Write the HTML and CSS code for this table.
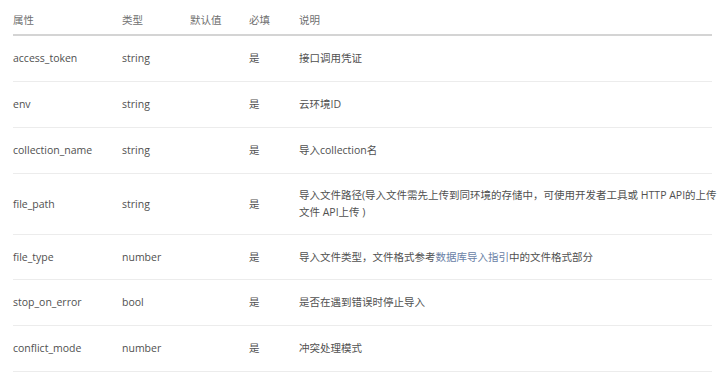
FILE: index.html
```html
<!DOCTYPE html>
<html lang="zh">
<head>
<meta charset="utf-8">
<link rel="stylesheet" href="styles.css">
</head>
<body>
<div class="table">
  <div class="row head">
    <div>属性</div><div>类型</div><div>默认值</div><div>必填</div><div>说明</div>
  </div>
  <div class="row">
    <div>access_token</div><div>string</div><div></div><div>是</div><div>接口调用凭证</div>
  </div>
  <div class="row">
    <div>env</div><div>string</div><div></div><div>是</div><div>云环境ID</div>
  </div>
  <div class="row">
    <div>collection_name</div><div>string</div><div></div><div>是</div><div>导入collection名</div>
  </div>
  <div class="row tall">
    <div>file_path</div><div>string</div><div></div><div>是</div><div class="desc">导入文件路径(导入文件需先上传到同环境的存储中，可使用开发者工具或 HTTP API的上传<br>文件 API上传 )</div>
  </div>
  <div class="row short">
    <div>file_type</div><div>number</div><div></div><div>是</div><div>导入文件类型，文件格式参考<span class="link">数据库导入指引</span>中的文件格式部分</div>
  </div>
  <div class="row">
    <div>stop_on_error</div><div>bool</div><div></div><div>是</div><div>是否在遇到错误时停止导入</div>
  </div>
  <div class="row">
    <div>conflict_mode</div><div>number</div><div></div><div>是</div><div>冲突处理模式</div>
  </div>
</div>
</body>
</html>
```

FILE: styles.css
```css
html, body {
  margin: 0;
  padding: 0;
  background: #ffffff;
}
body {
  font-family: "Open Sans", "Noto Sans CJK SC", sans-serif;
  font-size: 10.5px;
  line-height: 17px;
  color: #505050;
}
.table {
  margin-left: 13px;
  width: 699px;
}
.row {
  display: grid;
  grid-template-columns: 109px 68px 59px 50px 1fr;
  align-items: center;
  padding: 14px 0;
  border-bottom: 1px solid #ececec;
}
.row.head {
  padding: 12px 0 5px;
  border-bottom: 2px solid #d4d4d4;
  color: #707070;
}
.row.tall {
  padding: 13px 0 13px;
}
.row.short {
  padding: 14px 0 13px;
}
.desc {
  white-space: nowrap;
}
.link {
  color: #6a7fa6;
}
```
